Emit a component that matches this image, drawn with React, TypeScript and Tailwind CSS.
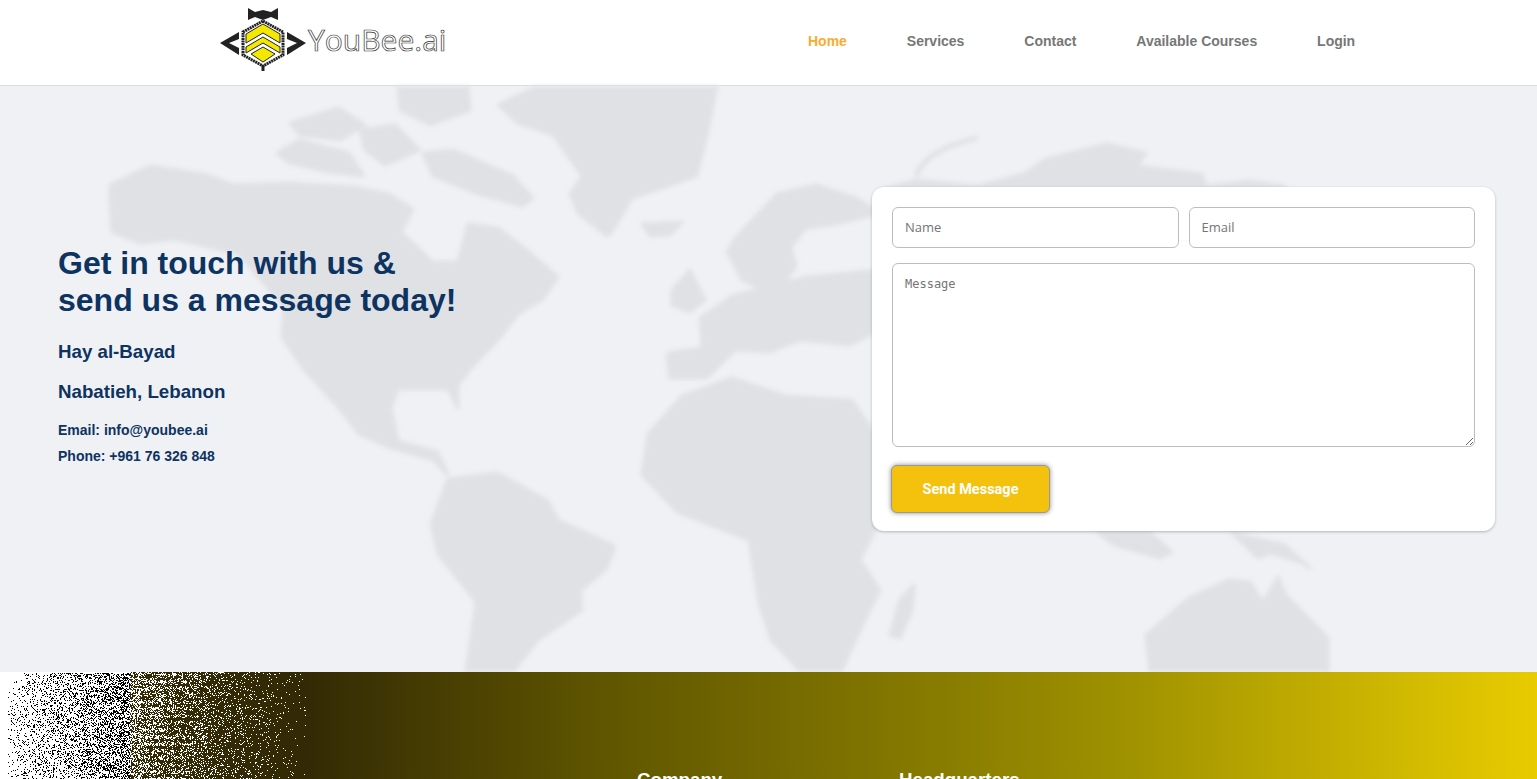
import React from 'react';

const land = [
  // north america
  '110,185 150,166 204,174 234,185 289,183 354,187 389,194 413,209 401,232 433,262 458,262 468,224 498,228 523,247 558,277 543,299 518,314 498,340 473,366 458,385 458,408 448,389 398,389 391,408 398,441 438,452 448,475 433,460 388,447 359,434 339,408 304,370 282,337 284,307 239,254 175,239 140,243 112,232 110,202',
  // arctic islands
  '277,153 299,140 349,153 364,176 329,172 289,163',
  '290,123 339,108 365,125 340,140 300,135',
  '398,86 468,86 470,110 430,125 400,110',
  '423,153 453,150 513,176 533,198 523,206 478,194 433,176',
  '360,130 395,125 420,150 385,165 365,150',
  // greenland
  '498,105 538,86 717,86 707,135 697,176 632,198 612,232 607,236 578,213 570,194 582,176 553,135 518,123',
  '642,224 682,222 670,235 650,236',
  // south america
  '448,479 498,473 548,501 558,520 615,546 607,568 580,591 582,610 538,640 513,672 466,672 476,602 438,554 431,524',
  // africa
  '642,475 648,434 682,396 732,378 786,396 852,400 900,470 880,520 860,560 880,590 865,620 841,672 801,672 771,640 759,604 749,540 677,512',
  '890,635 900,600 914,585 912,610 900,638',
  // europe
  '667,355 672,352 702,348 700,318 732,296 806,277 880,270 880,330 850,345 800,340 770,352 735,350 707,378 670,378',
  '727,251 737,236 777,194 816,185 856,198 880,213 836,224 806,228 791,247 796,266 777,295 742,280',
  '672,290 690,270 705,300 690,312 672,305',
  // asia, mostly behind the form
  '880,190 916,180 977,186 1024,174 1046,159 1107,144 1146,153 1137,166 1202,174 1206,186 1250,181 1284,186 1320,260 1250,400 1160,500 1060,480 950,420 880,400',
  // indonesia, new guinea
  '1098,533 1115,545 1160,558 1172,552 1150,533',
  '1232,533 1285,545 1310,568 1300,562 1270,553 1258,558',
  // australia
  '1146,635 1189,598 1228,580 1250,582 1263,602 1278,577 1286,595 1328,638 1328,672 1150,672',
];

// how much white shows at a given x in the left end of the footer
function whiteAt(x: number) {
  if (x < 100) return 0.92 - ((x - 8) / 92) * 0.32;
  if (x < 160) return 0.6 - ((x - 100) / 60) * 0.15;
  if (x < 215) return 0.45 - ((x - 160) / 55) * 0.3;
  return Math.max(0, 0.15 - ((x - 215) / 95) * 0.15);
}

function speckle() {
  let seed = 7;
  const rnd = () => {
    seed = (seed * 16807) % 2147483647;
    return seed / 2147483647;
  };
  let white = '';
  let black = '';
  for (let y = 0; y < 107; y++) {
    for (let x = 8; x < 316; x++) {
      let p = whiteAt(x);
      if (x > 140 && x < 195) p *= 0.8 + 0.35 * Math.sin(y * 0.9);
      const corner = (22 - x) * (22 - x) + (18 - y) * (18 - y) > 150 && x < 22 && y < 18;
      if (corner || y < 1) p = x < 130 ? 1 : p;
      const on = rnd() < p;
      if (on) white += `M${x} ${y}h1v1h-1z`;
      else if (x < 130) black += `M${x} ${y}h1v1h-1z`;
    }
  }
  return { white, black };
}

const dots = speckle();

const Logo = () => (
  <svg viewBox="218 5 232 68" className="w-[232px] h-[68px] block">
    <path d="M248 8l7 4 8-2 8 2 7-4v12l-7-3-8 3-8-3-7 3z" fill="#222" />
    <path d="M263 21l20 11v23l-20 11-20-11V32z" fill="#fff" stroke="#222" strokeWidth="3" strokeDasharray="2 0.6" />
    <path d="M263 24l17 10v9l-17-10-17 10v-9z" fill="#f5e800" stroke="#222" strokeWidth="1" />
    <path d="M263 37l17 10v6l-17-10-17 10v-6z" fill="#f5e800" stroke="#222" strokeWidth="1" />
    <path d="M263 47l12 7-12 8-12-8z" fill="#f5e800" stroke="#222" strokeWidth="1" />
    <path d="M239 32v7l-10 4 10 5v7l-19-12zM287 32v7l10 4-10 5v7l19-12z" fill="#222" />
    <rect x="261.500" y="65" width="3" height="6" fill="#222" />
    <text x="308" y="51" fontFamily="'Open Sans', sans-serif" fontSize="30" fill="#fff" stroke="#333" strokeWidth="0.7">YouBee.ai</text>
  </svg>
);

const links = ['Home', 'Services', 'Contact', 'Available Courses', 'Login'];

export default function App() {
  return (
    <div className="h-screen overflow-hidden bg-white font-['Liberation_Sans',Arial,sans-serif]">
      <header className="h-[86px] flex items-start border-b border-[#dddddd] pl-[218px] pt-[5px]">
        <Logo />
        <nav className="flex gap-[59.9px] ml-[358px] mt-[28px] text-sm font-bold leading-4 text-[#777777]">
          {links.map((l, i) => (
            <a key={l} className={i === 0 ? 'text-[#fbab2c]' : ''}>{l}</a>
          ))}
        </nav>
      </header>

      <main className="relative h-[586px] bg-[#f0f1f5] flex items-start justify-between pl-[58px] pr-[42px]">
        <svg viewBox="0 86 1537 586" className="absolute inset-0 w-full h-full blur-[2px]">
          {land.map((p, i) => <polygon key={i} points={p} fill="#e0e1e5" stroke="#e0e1e5" strokeWidth="3" strokeLinejoin="round" />)}
          <path d="M916 176Q925 150 977 138" fill="none" stroke="#e0e1e5" strokeWidth="5" />
        </svg>

        <div className="relative pt-[159px] text-[#0d3361] font-bold">
          <h1 className="text-[32px] leading-[37px]">Get in touch with us &amp;<br />send us a message today!</h1>
          <p className="text-[18.72px] leading-5 mt-[23px]">Hay al-Bayad</p>
          <p className="text-[18.72px] leading-5 mt-5">Nabatieh, Lebanon</p>
          <p className="text-sm leading-4 mt-5">Email: info@youbee.ai</p>
          <p className="text-sm leading-4 mt-[10px]">Phone: +961 76 326 848</p>
        </div>

        <form className="relative mt-[101px] w-[623px] h-[344px] bg-white rounded-xl p-5 shadow-[0_1px_3px_rgba(0,0,0,0.25)]">
          <div className="flex gap-[10px]">
            <input placeholder="Name" className="flex-1 min-w-0 h-[41px] px-3 pb-[2px] border border-[#c0bbc0] rounded-md text-[13px] font-['Open_Sans',sans-serif] placeholder:text-[#757575]" />
            <input placeholder="Email" className="flex-1 min-w-0 h-[41px] px-3 pb-[2px] border border-[#c0bbc0] rounded-md text-[13px] font-['Open_Sans',sans-serif] placeholder:text-[#757575]" />
          </div>
          <textarea placeholder="Message" className="block w-full h-[184px] mt-[15px] px-3 py-[12px] border border-[#c0bbc0] rounded-md text-xs leading-4 font-['DejaVu_Sans_Mono',monospace] placeholder:text-[#757575]" />
          <button type="button" className="block -ml-px mt-[18px] w-[159px] h-[48px] pt-[2px] rounded-md bg-[#f4c20d] border border-[#999999] text-white text-[14.5px] font-bold font-['Roboto',sans-serif] shadow-[0_0_5px_rgba(0,0,0,0.45)]">
            Send Message
          </button>
        </form>
      </main>

      <footer className="relative h-[107px] overflow-hidden bg-[linear-gradient(to_right,#332a05_0%,#332a05_20%,#5f5500_39%,#9c8f00_72%,#e8cc00_100%)]">
        <svg viewBox="0 0 320 107" className="absolute left-0 top-0 w-[320px] h-[107px]">
          <rect x="0" y="0" width="8" height="107" fill="#fff" />
          <path d={dots.black} fill="#000" />
          <path d={dots.white} fill="#fff" />
        </svg>
        <div className="relative flex pl-[637px] pt-[98px] text-white font-bold text-[18.72px] leading-5">
          <h3 className="w-[262px]">Company</h3>
          <h3>Headquarters</h3>
        </div>
      </footer>
    </div>
  );
}
